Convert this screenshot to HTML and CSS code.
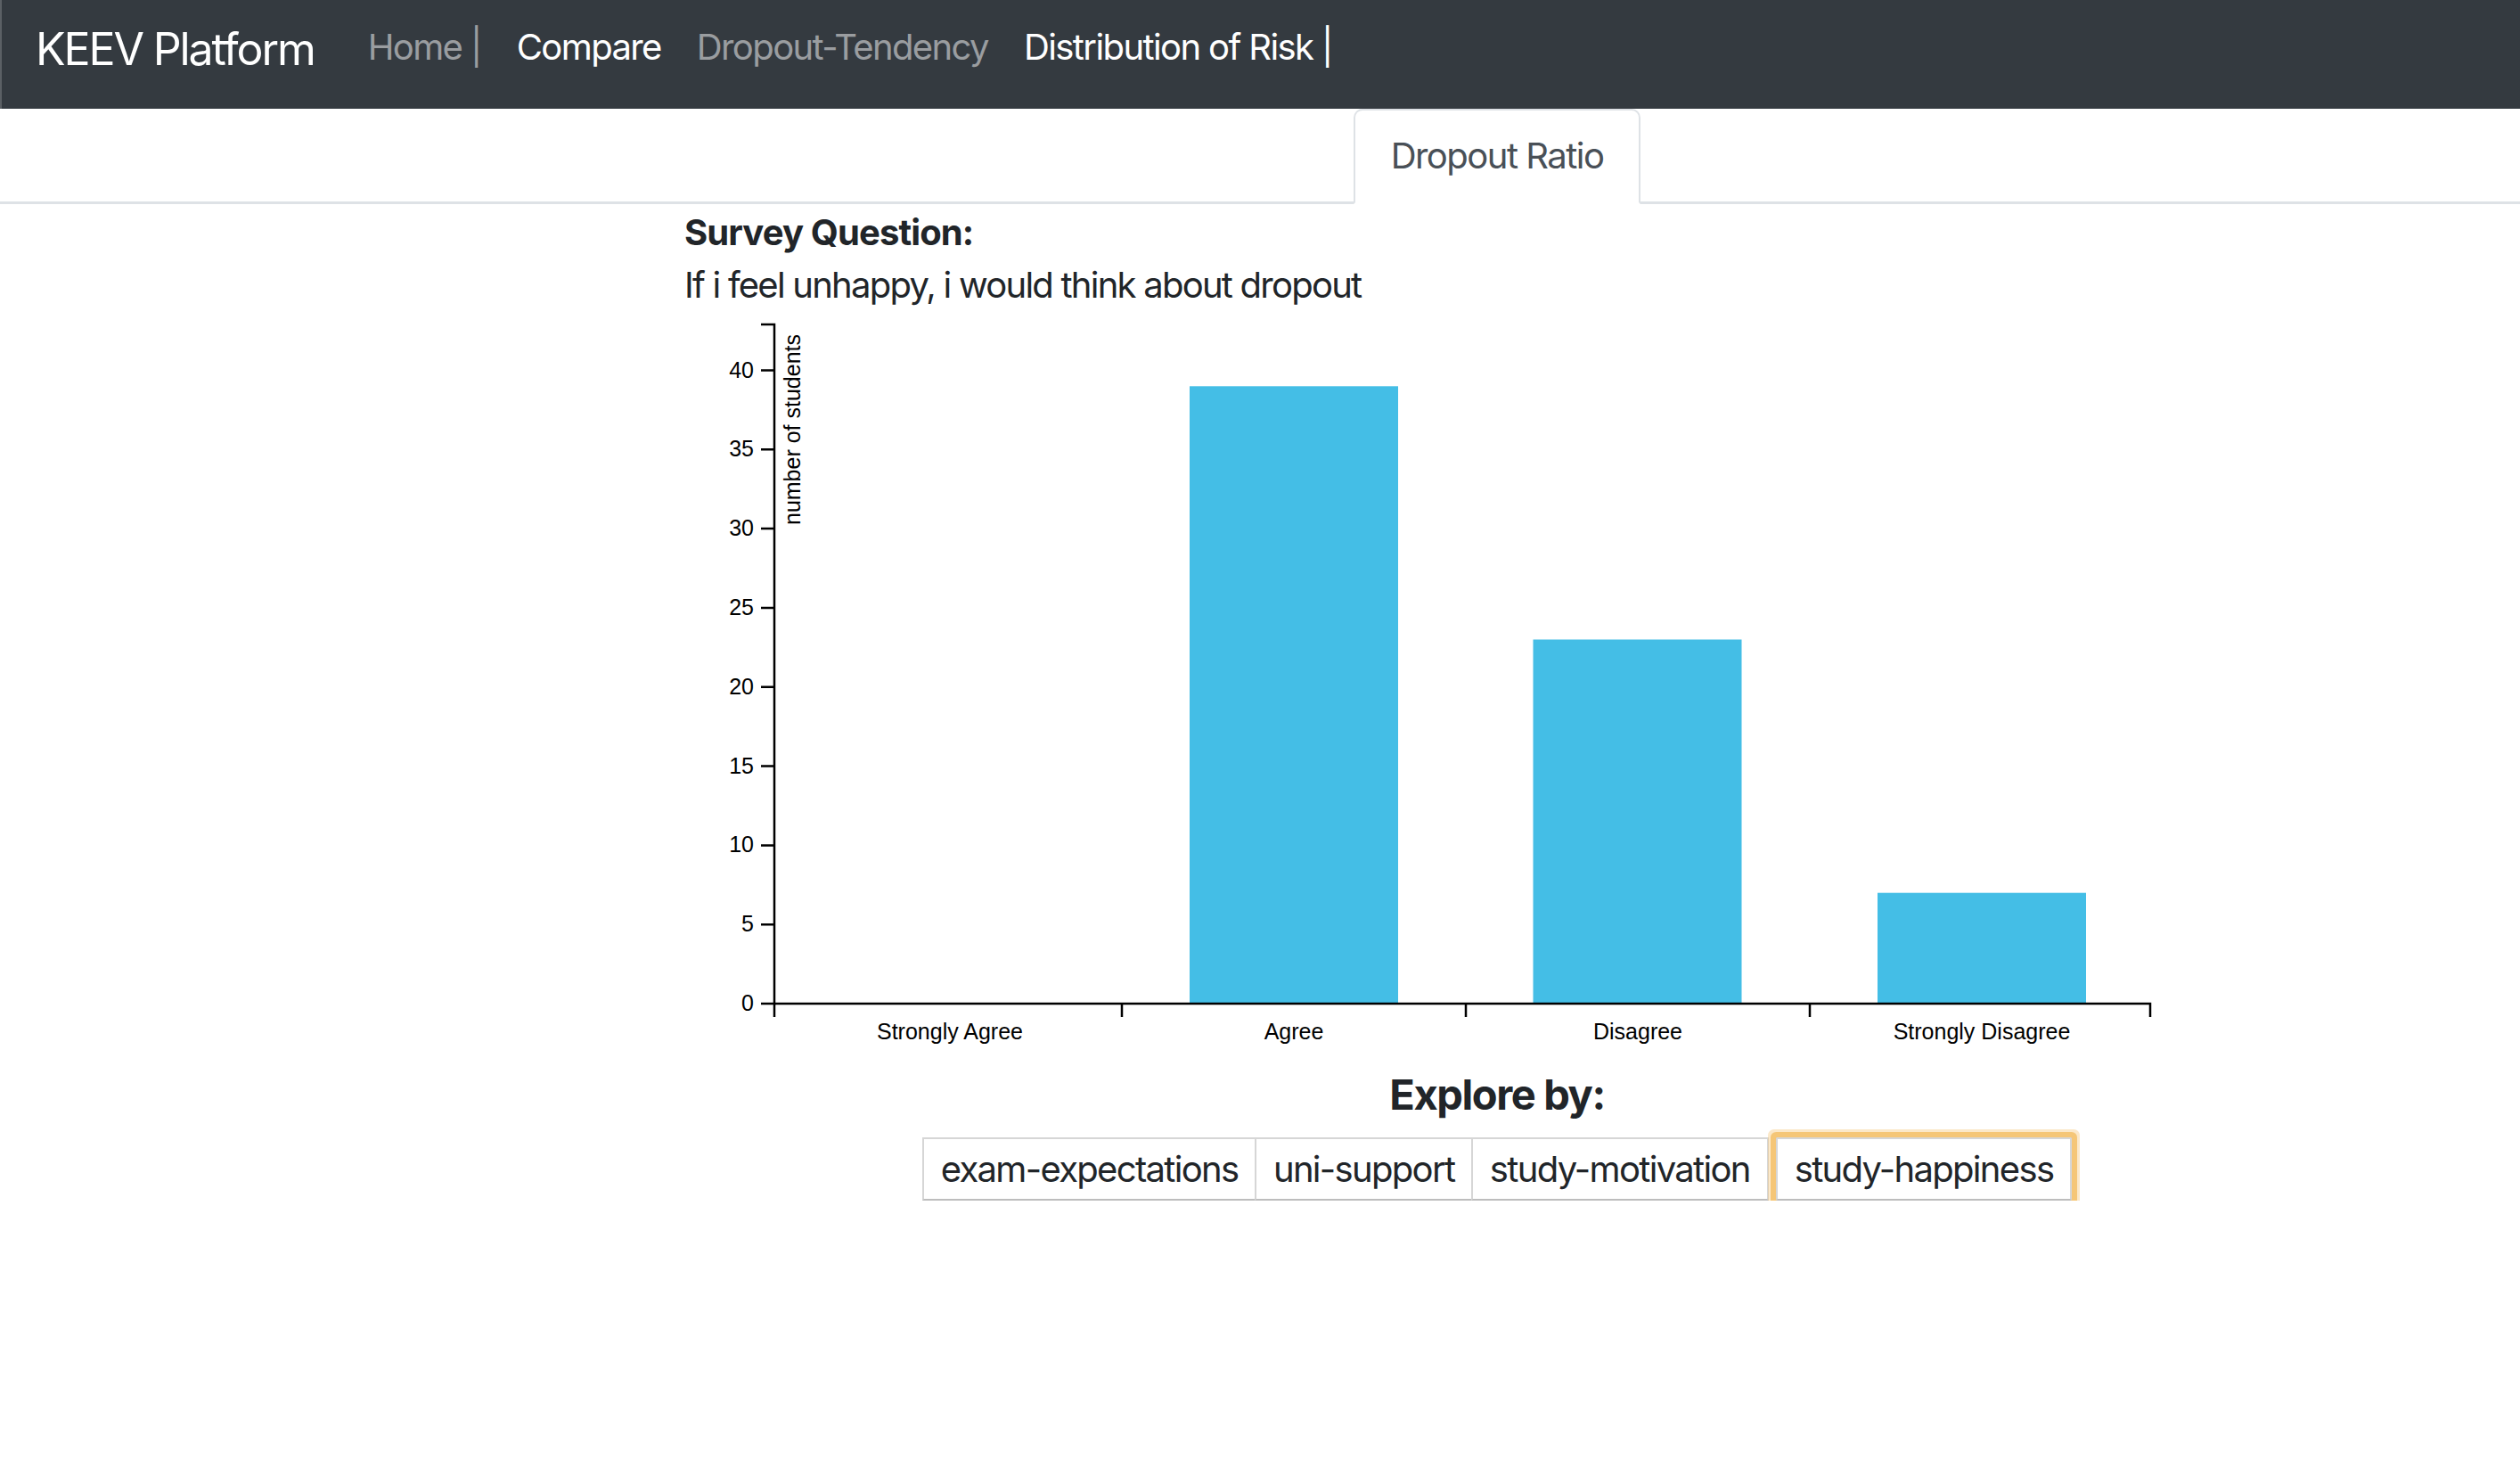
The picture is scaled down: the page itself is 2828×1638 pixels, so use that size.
FILE: index.html
```html
<!DOCTYPE html>
<html lang="en">
<head>
<meta charset="utf-8">
<title>KEEV Platform</title>
<link rel="stylesheet" href="styles.css">
</head>
<body>
<nav class="navbar">
  <a class="brand" href="#">KEEV Platform</a>
  <a class="nav-link muted" href="#">Home |</a>
  <a class="nav-link" href="#">Compare</a>
  <a class="nav-link muted" href="#">Dropout-Tendency</a>
  <a class="nav-link" href="#">Distribution of Risk |</a>
</nav>
<div class="tabs">
  <div class="tabs-inner">
    <a class="tab active" href="#">Dropout Ratio</a>
  </div>
</div>
<main class="content">
  <div class="question">
    <div class="q-title">Survey Question:</div>
    <div class="q-text">If i feel unhappy, i would think about dropout</div>
  </div>
  <svg class="chart" width="1824" height="849" viewBox="0 0 1824 849">
    <g class="bars" fill="#44bee6">
      <rect x="567" y="84.3" width="234" height="692.7"></rect>
      <rect x="952.5" y="368.5" width="234" height="408.5"></rect>
      <rect x="1339" y="652.7" width="234" height="124.3"></rect>
    </g>
    <g class="axis" stroke="#000" stroke-width="2.5" fill="none">
      <path d="M86,15H101V777H86"></path>
      <path d="M86,66.5H101M86,155.3H101M86,244.1H101M86,332.9H101M86,421.8H101M86,510.6H101M86,599.4H101M86,688.2H101"></path>
      <path d="M101,792V777H1645V792"></path>
      <path d="M491,777V792M877,777V792M1263,777V792"></path>
    </g>
    <g class="ylabels" text-anchor="end">
      <text x="78" y="777" dy="0.32em">0</text>
      <text x="78" y="688.2" dy="0.32em">5</text>
      <text x="78" y="599.4" dy="0.32em">10</text>
      <text x="78" y="510.6" dy="0.32em">15</text>
      <text x="78" y="421.8" dy="0.32em">20</text>
      <text x="78" y="332.9" dy="0.32em">25</text>
      <text x="78" y="244.1" dy="0.32em">30</text>
      <text x="78" y="155.3" dy="0.32em">35</text>
      <text x="78" y="66.5" dy="0.32em">40</text>
    </g>
    <g class="xlabels" text-anchor="middle">
      <text x="298" y="817">Strongly Agree</text>
      <text x="684" y="817">Agree</text>
      <text x="1070" y="817">Disagree</text>
      <text x="1456" y="817">Strongly Disagree</text>
    </g>
    <text class="ytitle" transform="rotate(-90)" x="-26" y="130" text-anchor="end">number of students</text>
  </svg>
  <h4 class="explore">Explore by:</h4>
  <div class="btn-group">
    <button class="btn">exam-expectations</button>
    <button class="btn">uni-support</button>
    <button class="btn">study-motivation</button>
    <button class="btn focused">study-happiness</button>
  </div>
</main>
</body>
</html>
```
FILE: styles.css
```css
html, body {
  margin: 0;
  padding: 0;
  background: #ffffff;
}

body {
  font-family: Inter, "Noto Sans", "Liberation Sans", sans-serif;
  font-size: 40px;
  line-height: 1.5;
  letter-spacing: -0.04em;
  color: #212529;
}

a {
  text-decoration: none;
}

.navbar {
  box-sizing: border-box;
  height: 122px;
  background: #343a40;
  border-left: 2px solid #5b6065;
  display: flex;
  align-items: flex-start;
  padding: 21px 38px 0;
}

.brand {
  font-size: 50px;
  line-height: 68px;
  letter-spacing: -0.042em;
  color: #ffffff;
  margin-right: 40px;
  white-space: nowrap;
}

.nav-link {
  font-size: 40px;
  line-height: 64px;
  padding: 0 20px;
  color: #ffffff;
  white-space: nowrap;
}

.nav-link.muted {
  color: #9a9da0;
}

.tabs {
  border-bottom: 3px solid #dee2e6;
}

.tabs-inner {
  margin-left: 768px;
  width: 1824px;
  display: flex;
  justify-content: center;
}

.tab {
  display: block;
  margin-bottom: -3px;
  padding: 21px 40px 22px;
  line-height: 60px;
  font-size: 40px;
  letter-spacing: -0.038em;
  color: #495057;
  background: #ffffff;
  border: 2.5px solid #dee2e6;
  border-bottom-color: #ffffff;
  border-radius: 10px 10px 0 0;
}

.content {
  margin-left: 768px;
  width: 1824px;
}

.question {
  line-height: 59px;
  padding-top: 2px;
}

.q-title {
  font-weight: 700;
  letter-spacing: -0.022em;
}

.q-text {
  letter-spacing: -0.044em;
}

.chart {
  display: block;
  overflow: visible;
}

.chart text {
  font-family: "Liberation Sans", Arial, Helvetica, sans-serif;
  font-size: 25px;
  letter-spacing: 0;
  fill: #000000;
}

.explore {
  margin: 0;
  font-size: 47px;
  line-height: 60px;
  font-weight: 700;
  letter-spacing: -0.03em;
  text-align: center;
}

.btn-group {
  display: flex;
  justify-content: center;
  margin-top: 18px;
}

.btn {
  font-family: Inter, "Noto Sans", "Liberation Sans", sans-serif;
  font-size: 40px;
  line-height: 60px;
  letter-spacing: -0.042em;
  color: #212529;
  background: #ffffff;
  border: 2.5px solid #d6d6d6;
  border-bottom-color: #bdbdbd;
  border-radius: 0;
  padding: 3.5px 19px;
  margin: 0;
}

.btn + .btn {
  margin-left: -2.5px;
}

.btn.focused {
  margin-left: 8px;
  border-radius: 2px;
  box-shadow: 0 0 0 6px #f5c677, 0 0 0 9px rgba(245, 198, 119, 0.4);
}
```
